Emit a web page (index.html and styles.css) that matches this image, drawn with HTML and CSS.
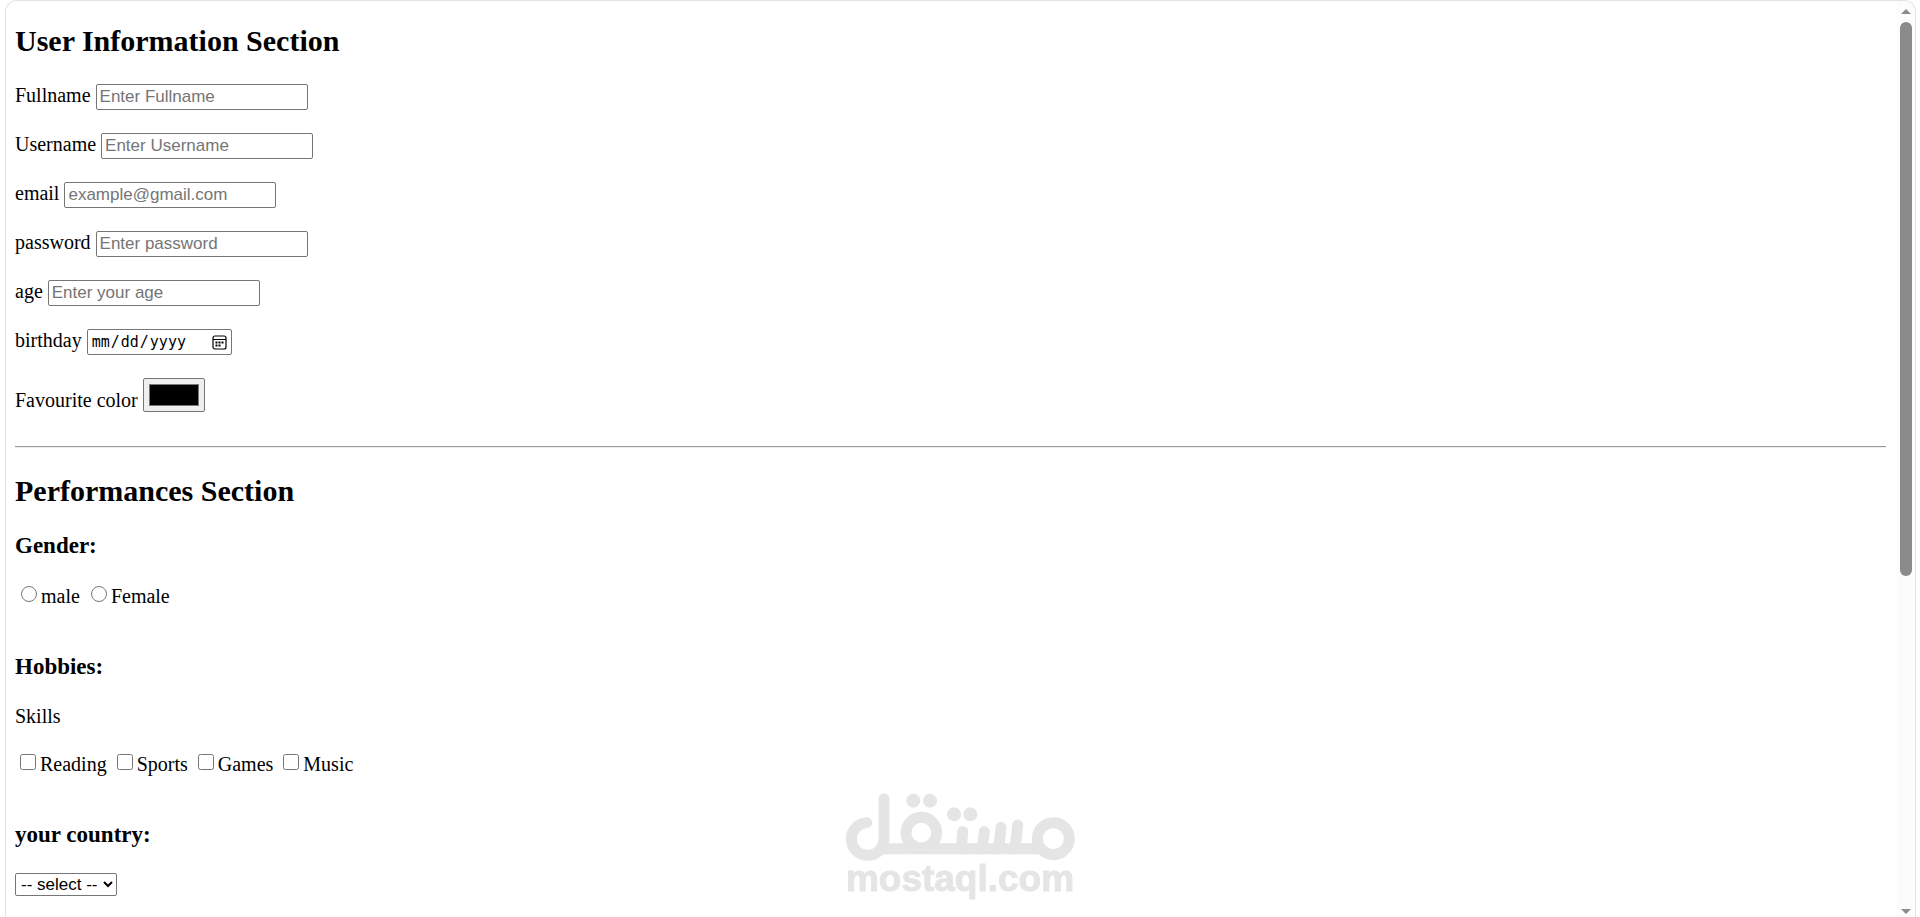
FILE: index.html
```html
<!DOCTYPE html>
<html lang="en">
<head>
<meta charset="utf-8">
<title>User form</title>
<link rel="stylesheet" href="styles.css">
</head>
<body>
<div class="frame">
  <main class="content">
    <form>
      <h2 class="title">User Information Section</h2>
      <div class="fields">
        <div class="field"><label for="fullname">Fullname</label><input class="box" id="fullname" type="text" placeholder="Enter Fullname"></div>
        <div class="field"><label for="username">Username</label><input class="box" id="username" type="text" placeholder="Enter Username"></div>
        <div class="field"><label for="email">email</label><input class="box" id="email" type="email" placeholder="example@gmail.com"></div>
        <div class="field"><label for="password">password</label><input class="box" id="password" type="password" placeholder="Enter password"></div>
        <div class="field"><label for="age">age</label><input class="box" id="age" type="number" placeholder="Enter your age"></div>
        <div class="field"><label for="birthday">birthday</label><input class="box date" id="birthday" type="date"></div>
        <div class="field color-field"><label for="color">Favourite color</label><input class="color" id="color" type="color" value="#000000"></div>
      </div>
      <hr class="rule">
      <h2 class="title">Performances Section</h2>
      <h3 class="subtitle">Gender:</h3>
      <div class="options genders">
        <label class="option"><input class="radio" type="radio" name="gender">male</label>
        <label class="option"><input class="radio" type="radio" name="gender">Female</label>
      </div>
      <h3 class="subtitle spaced">Hobbies:</h3>
      <p class="skills">Skills</p>
      <div class="options">
        <label class="option"><input class="check" type="checkbox">Reading</label>
        <label class="option"><input class="check" type="checkbox">Sports</label>
        <label class="option"><input class="check" type="checkbox">Games</label>
        <label class="option"><input class="check" type="checkbox">Music</label>
      </div>
      <h3 class="subtitle spaced" id="country-title">your country:</h3>
      <select class="country" aria-labelledby="country-title"><option>-- select --</option></select>
    </form>
  </main>
  <div class="scrollbar">
    <svg class="arrow" viewBox="0 0 10 5"><path d="M5 0L10 5H0Z" fill="#8b8b8b"/></svg>
    <div class="track"><div class="thumb"></div></div>
    <svg class="arrow" viewBox="0 0 10 5"><path d="M0 0H10L5 5Z" fill="#8b8b8b"/></svg>
  </div>
</div>
<div class="watermark">
  <svg class="logo" viewBox="75 68 690 204" fill="none" stroke="#e5e5e5" stroke-width="33" stroke-linecap="round">
    <path d="M140 157A49 49 0 1 0 192 205V85"/>
    <path d="M185 235H665" stroke-linecap="butt"/>
    <circle cx="304" cy="187" r="46"/>
    <path d="M428 184L424 235M493 184L487 235M543 171L536 235M593 164L585 235"/>
    <circle cx="700" cy="205" r="48"/>
    <g fill="#e5e5e5" stroke="none"><circle cx="280" cy="91" r="21"/><circle cx="330" cy="91" r="21"/><circle cx="402" cy="132" r="21"/><circle cx="451" cy="132" r="21"/></g>
  </svg>
  <span class="domain">mostaql.com</span>
</div>
</body>
</html>
```
FILE: styles.css
```css
* { box-sizing: border-box; }
body {
  margin: 0;
  height: 100vh;
  overflow: hidden;
  background: #fff;
  color: #000;
  font: 20px/23px "Liberation Serif", "Times New Roman", serif;
}
.frame {
  display: flex;
  height: 100vh;
  margin: 0 4px 0 5px;
  border: 1px solid #e2e2e2;
  border-bottom: 0;
  border-radius: 12px 12px 0 0;
  overflow: hidden;
}
.content {
  flex: 1;
  padding: 23px 11px 0 9px;
  overflow: hidden;
}
.title { margin: 0; font-size: 30px; line-height: 34px; }
.fields {
  display: flex;
  flex-direction: column;
  gap: 23px;
  margin-top: 26px;
}
.field { display: flex; align-items: baseline; gap: 5px; }
.box {
  width: 212px;
  height: 26px;
  margin: 0;
  padding: 1px 3px;
  border: 1px solid #767676;
  border-radius: 2px;
  background: #fff;
  font: 17px "Liberation Sans", Arial, sans-serif;
}
.box::placeholder { color: #757575; }
.box::-webkit-inner-spin-button { display: none; }
.date { width: 145px; font: 15px "DejaVu Sans Mono", monospace; }
.date::-webkit-calendar-picker-indicator {
  width: 15px;
  height: 15px;
  margin: 0;
  padding: 0 2px 0 0;
  background: url("data:image/svg+xml,%3Csvg xmlns='http://www.w3.org/2000/svg' viewBox='0 0 15 15'%3E%3Crect x='1' y='1' width='13' height='13' rx='2' fill='none' stroke='black' stroke-width='1.2'/%3E%3Cpath d='M1 4.5H14' stroke='black' stroke-width='1.2'/%3E%3Cpath d='M3.5 7.5h2M6.5 7.5h2M9.5 7.5h2M3.5 10.5h2M6.5 10.5h2' stroke='black' stroke-width='1.8'/%3E%3C/svg%3E") center / 15px 15px no-repeat;
}
.color-field { align-items: flex-end; }
.color {
  width: 62px;
  height: 34px;
  margin: 0;
  padding: 1px 3px;
  border: 1px solid #767676;
  border-radius: 2px;
  background: #efefef;
}
.rule { margin: 34px 0 26px; border: 0; border-top: 1px solid #9a9a9a; border-bottom: 1px solid #eee; }
.subtitle { margin: 25px 0 25px; font-size: 23px; line-height: 26px; }
.spaced { margin-top: 46px; }
.options { display: flex; gap: 5px; }
.option { display: flex; }
.radio { width: 16px; height: 16px; margin: 1px 4px 0 6px; }
.check { width: 16px; height: 16px; margin: 1px 4px 0 5px; }
.genders { margin-top: 26px; }
.skills { margin: 0 0 25px; }
.country {
  display: block;
  width: 102px;
  height: 23px;
  padding: 0 1px;
  border: 1px solid #767676;
  border-radius: 2px;
  background: #fff;
  color: #000;
  font: 17px "Liberation Sans", Arial, sans-serif;
}
.scrollbar {
  display: flex;
  flex-direction: column;
  align-items: center;
  gap: 8px;
  width: 18px;
  padding: 8px 0 3px;
  background: #fcfcfc;
}
.arrow { width: 10px; height: 5px; }
.track { flex: 1; width: 12px; }
.thumb { height: 63%; border-radius: 6px; background: #8b8b8b; }
.watermark {
  position: fixed;
  left: 50%;
  bottom: 20px;
  display: flex;
  flex-direction: column;
  align-items: center;
  transform: translateX(-50%);
  color: #e5e5e5;
}
.logo { width: 230px; height: 68px; }
.domain {
  font: bold 37px/36px "Liberation Sans", Arial, sans-serif;
  -webkit-text-stroke: 1px #e5e5e5;
}
```
